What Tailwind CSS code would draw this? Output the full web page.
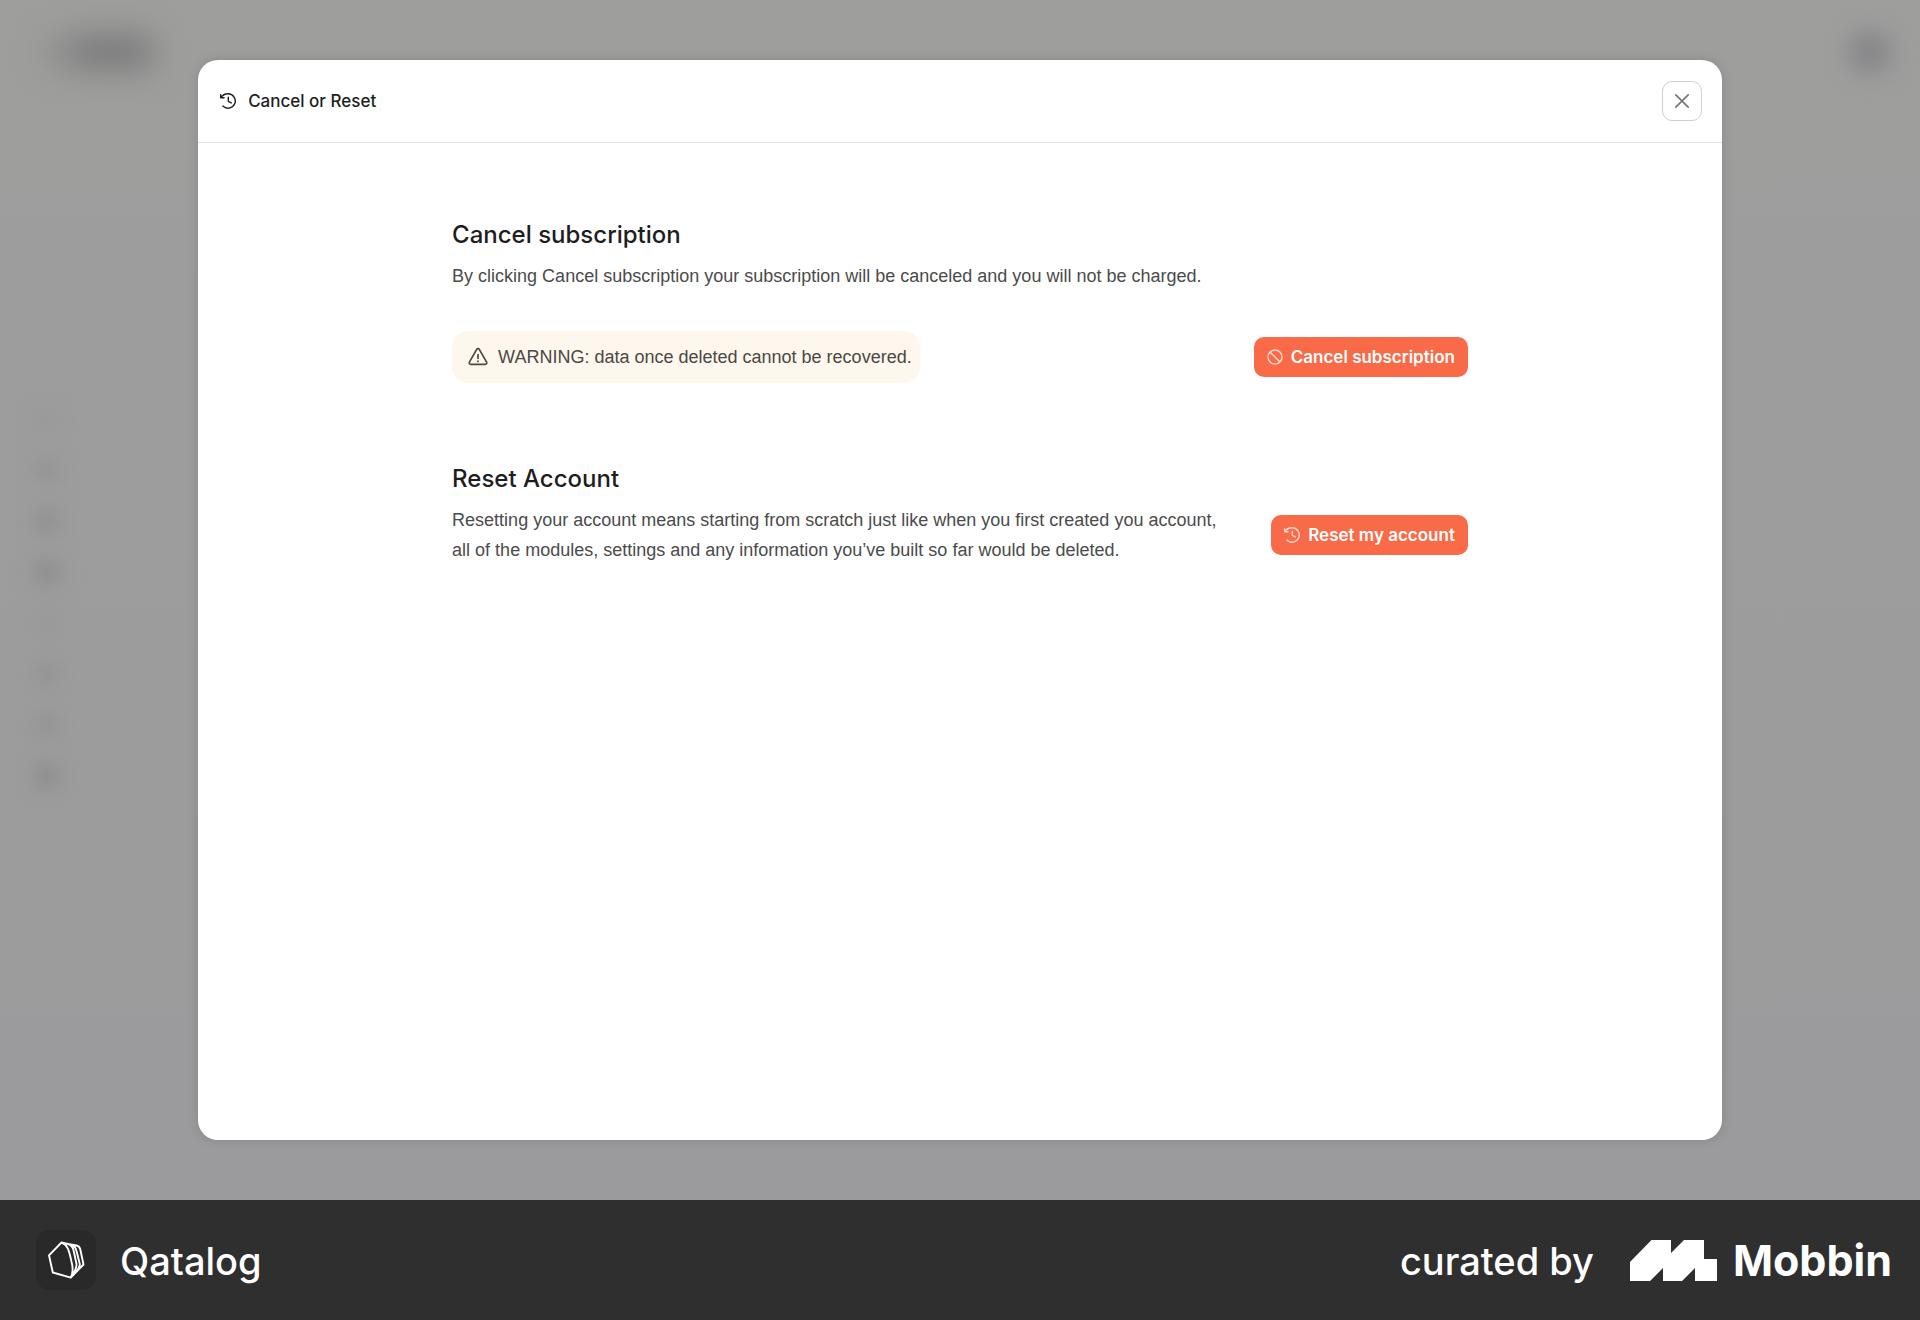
<!DOCTYPE html>
<html lang="en">
<head>
<meta charset="utf-8">
<meta name="viewport" content="width=device-width, initial-scale=1">
<title>Cancel or Reset</title>
<script src="https://cdn.jsdelivr.net/npm/@tailwindcss/browser@4"></script>
</head>
<body class="flex min-h-screen flex-col bg-[#2f2f2f] font-['Inter',sans-serif] text-[#1e1e1e]">

<div class="relative flex flex-1 flex-col bg-linear-to-b from-[#9e9e9d] to-[#9b9b9d] px-[10.32%] py-[60px]">

  <!-- Blurred app behind the dialog -->
  <div class="absolute inset-0 overflow-hidden" aria-hidden="true">
    <div class="flex items-center justify-between pt-8 pr-[30px] pl-12">
      <div class="flex items-center gap-1 blur-[16px]">
        <div class="h-6 w-5 bg-[#888888]"></div>
        <div class="h-8 w-20 rounded bg-[#777777]"></div>
      </div>
      <div class="size-10 rounded-full bg-[#838386] blur-[12px]"></div>
    </div>
    <div class="mt-[337px] flex w-[94px] flex-col items-center gap-[31px] blur-[10px]">
      <div class="size-5 bg-[#98989b]"></div>
      <div class="size-5 bg-[#919193]"></div>
      <div class="size-5 bg-[#8c8c8e]"></div>
      <div class="size-5 bg-[#88888a]"></div>
      <div class="size-5 bg-[#98989a]"></div>
      <div class="size-5 bg-[#919193]"></div>
      <div class="size-5 bg-[#919193]"></div>
      <div class="size-5 bg-[#88888a]"></div>
    </div>
  </div>

  <main role="dialog" aria-labelledby="dialog-title" class="relative flex flex-1 flex-col rounded-[20px] bg-white shadow-[0_0_12px_rgba(0,0,0,0.14)]">
    <header class="flex items-center justify-between border-b border-[#e4e4e4] px-5 py-[21px]">
      <div class="flex items-center gap-3">
        <svg class="ml-0.5 size-4" viewBox="0 0 16 16" fill="none" stroke="currentColor" stroke-width="1.4" stroke-linecap="round" stroke-linejoin="round"><path d="M.7 1.6v3.2h3.4M1 4.7C2.4 2.200 4.700.8 8.100.8a7.200 7.200 0 1 1-5.200 12.200M8.300 4.200v4.100l2.900 1.600"/></svg>
        <h1 id="dialog-title" class="text-[17px]/6 font-medium">Cancel or Reset</h1>
      </div>
      <button type="button" aria-label="Close" class="flex size-10 items-center justify-center rounded-[10px] border border-[#cfcfcf] text-[#777777]">
        <svg class="size-4" viewBox="0 0 16 16" fill="none" stroke="currentColor" stroke-width="1.7" stroke-linecap="round"><path d="M1.800 1.800l12.400 12.400M14.200 1.800L1.800 14.200"/></svg>
      </button>
    </header>

    <div class="mx-auto flex w-2/3 flex-col gap-20 py-[76px]">
      <section>
        <h2 class="text-2xl/8 font-medium">Cancel subscription</h2>
        <p class="mt-2.5 font-['Liberation_Sans',sans-serif] text-lg/[30px] text-[#4b4b4b]">By clicking Cancel subscription your subscription will be canceled and you will not be charged.</p>
        <div class="mt-10 flex items-center justify-between">
          <p class="flex items-center gap-2.5 rounded-2xl bg-[#fef7ed] py-[11px] pr-2 pl-4 font-['Liberation_Sans',sans-serif] text-lg/[30px] text-[#4b4845]">
            <svg class="size-5 shrink-0" viewBox="0 0 20 20" fill="none" stroke="currentColor" stroke-width="1.700" stroke-linecap="round" stroke-linejoin="round"><path d="M8.700 2.300a1.500 1.500 0 0 1 2.600 0l7.300 12.900a1.500 1.500 0 0 1-1.300 2.200H2.700a1.500 1.500 0 0 1-1.300-2.200zM10 7.500v3.800M10 14v.4"/></svg>
            WARNING: data once deleted cannot be recovered.
          </p>
          <button type="button" class="flex h-10 items-center gap-2 rounded-[10px] bg-[#f96a48] px-[13px] text-[17px]/6 font-semibold text-white">
            <svg class="size-4" viewBox="0 0 16 16" fill="none" stroke="#ffd9cf" stroke-width="1.400"><circle cx="8" cy="8" r="7"/><path d="M3 3l10 10"/></svg>
            Cancel subscription
          </button>
        </div>
      </section>

      <section class="flex items-end justify-between">
        <div>
          <h2 class="text-2xl/8 font-medium">Reset Account</h2>
          <p class="mt-2.5 font-['Liberation_Sans',sans-serif] text-lg/[30px] text-[#4b4b4b]">Resetting your account means starting from scratch just like when you first created you account,<br>all of the modules, settings and any information you’ve built so far would be deleted.</p>
        </div>
        <button type="button" class="mb-2.5 flex h-10 shrink-0 items-center gap-2 rounded-[10px] bg-[#f96a48] px-[13px] text-[17px]/6 font-semibold text-white">
          <svg class="size-4" viewBox="0 0 16 16" fill="none" stroke="#ffd9cf" stroke-width="1.400" stroke-linecap="round" stroke-linejoin="round"><path d="M.7 1.6v3.2h3.4M1 4.7C2.4 2.200 4.700.8 8.100.8a7.200 7.200 0 1 1-5.200 12.200M8.300 4.200v4.100l2.900 1.600"/></svg>
          Reset my account
        </button>
      </section>
    </div>
  </main>
</div>

<footer class="flex h-[120px] items-center justify-between pr-7 pl-9 text-[38px]/[48px] font-medium text-white">
  <div class="flex items-center gap-6">
    <div class="size-[60px] rounded-[14px] bg-[#292929]">
      <svg class="size-[60px]" viewBox="0 0 60 60" fill="none" stroke="white" stroke-width="1.900" stroke-linejoin="round" stroke-linecap="round"><path d="M25.500 12.500L13 25.300L16.800 42.500L34.800 47.600C37 43 36.900 37 35.600 32C34.200 26 33.200 20.500 31.300 17.500Q29.500 14 25.500 12.500L32 14Q36.300 15.500 37.500 20L40.500 34Q41 39 34.800 47.600M32 14L35.500 14.800Q39.500 16 40.500 21L43.800 34Q44 38.500 34.800 47.600L47.500 34.500L44.200 19Q43.200 16 40.500 15.500L32 14"/></svg>
    </div>
    <span class="pt-0.5">Qatalog</span>
  </div>
  <div class="flex items-center">
    <span class="pt-0.5">curated by</span>
    <svg class="ml-9 h-[41px] w-[87px]" viewBox="0 0 87 41" fill="white"><path d="M0 22L21.500 0H41V13L54 0H74V19H87V41H65V28L52 41H33V28L20 41H0z"/></svg>
    <span class="ml-4 text-[43px]/[48px] font-bold">Mobbin</span>
  </div>
</footer>
</body>
</html>
